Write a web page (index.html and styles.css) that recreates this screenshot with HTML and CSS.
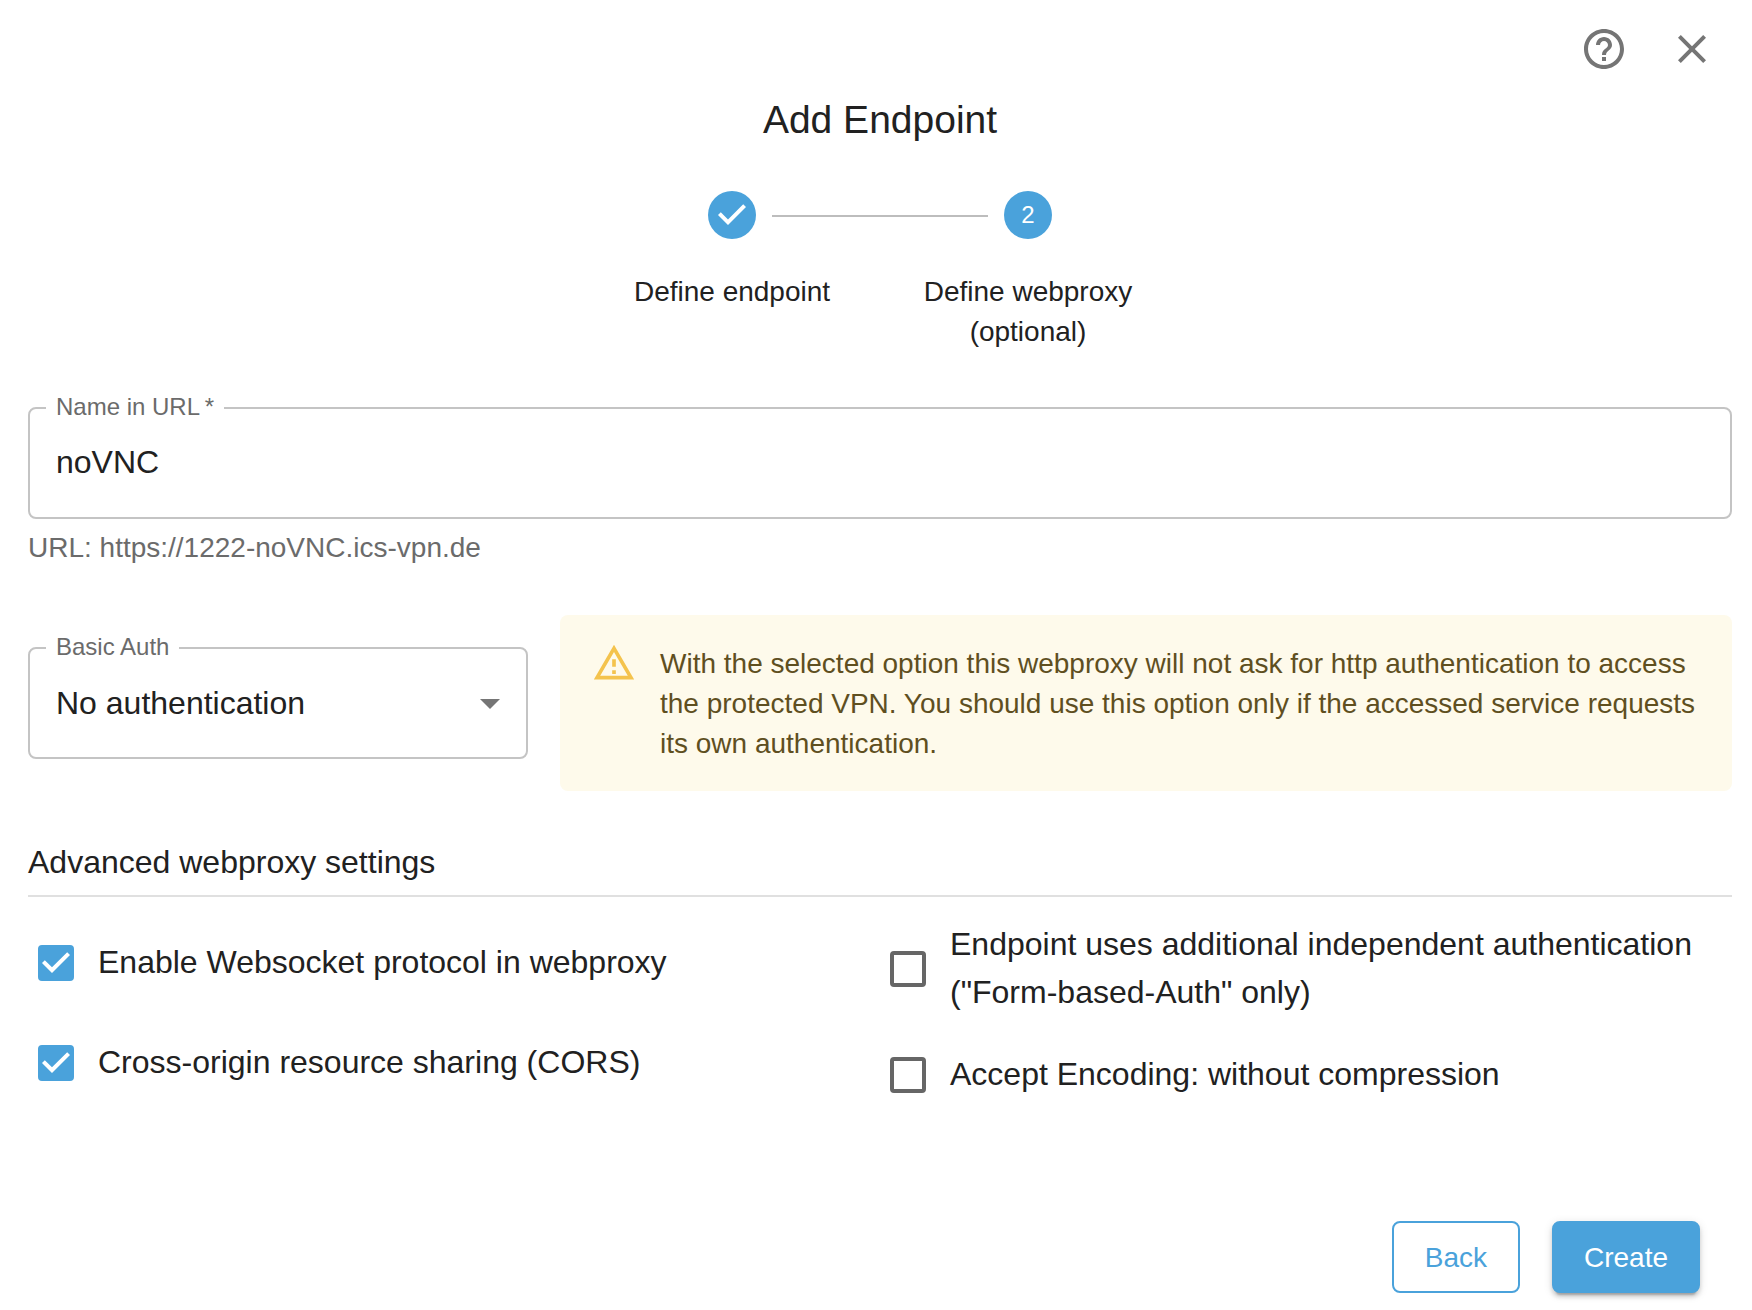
FILE: index.html
```html
<!DOCTYPE html>
<html lang="en">
<head>
<meta charset="utf-8">
<title>Add Endpoint</title>
<link rel="stylesheet" href="styles.css">
</head>
<body>
<main class="dialog">
  <header class="toolbar">
    <button class="icon-button" type="button" aria-label="Help">
      <svg class="icon" viewBox="0 0 24 24"><path d="M11 18h2v-2h-2v2zm1-16C6.48 2 2 6.48 2 12s4.48 10 10 10 10-4.48 10-10S17.52 2 12 2zm0 18c-4.41 0-8-3.59-8-8s3.59-8 8-8 8 3.59 8 8-3.59 8-8 8zm0-14c-2.21 0-4 1.79-4 4h2c0-1.1.9-2 2-2s2 .9 2 2c0 2-3 1.75-3 5h2c0-2.25 3-2.5 3-5 0-2.21-1.79-4-4-4z"/></svg>
    </button>
    <button class="icon-button" type="button" aria-label="Close">
      <svg class="icon" viewBox="0 0 24 24"><path d="M19 6.41L17.59 5 12 10.59 6.41 5 5 6.41 10.59 12 5 17.59 6.41 19 12 13.41 17.59 19 19 17.59 13.41 12z"/></svg>
    </button>
  </header>

  <form class="form">
    <h1 class="title">Add Endpoint</h1>

    <ol class="stepper">
      <li class="step">
        <span class="step-badge">
          <svg class="step-check" viewBox="0 0 24 24"><path d="M10 17l-5-5 1.4-1.4 3.6 3.6 7.6-7.6L19 8l-9 9z"/></svg>
        </span>
        <span class="step-label">Define endpoint</span>
      </li>
      <li class="step">
        <span class="step-badge">2</span>
        <span class="step-label">Define webproxy (optional)</span>
      </li>
    </ol>

    <div class="field">
      <fieldset class="outline">
        <legend class="legend"><label for="name">Name in URL&thinsp;*</label></legend>
        <input class="control" id="name" type="text" value="noVNC" required aria-describedby="name-help">
      </fieldset>
      <p class="helper" id="name-help">URL: https://1222-noVNC.ics-vpn.de</p>
    </div>

    <div class="auth">
      <fieldset class="outline auth-select">
        <legend class="legend"><label for="auth">Basic Auth</label></legend>
        <div class="select-row">
          <select class="control" id="auth"><option>No authentication</option></select>
          <svg class="icon select-arrow" viewBox="0 0 24 24"><path d="M7 10l5 5 5-5z"/></svg>
        </div>
      </fieldset>
      <div class="alert" role="alert">
        <svg class="alert-icon" viewBox="0 0 24 24"><path d="M12 5.99L19.53 19H4.47L12 5.99M12 2L1 21h22L12 2zm1 14h-2v2h2v-2zm0-6h-2v4h2v-4z"/></svg>
        <p class="alert-text">With the selected option this webproxy will not ask for http authentication to access the protected VPN. You should use this option only if the accessed service requests its own authentication.</p>
      </div>
    </div>

    <section class="advanced">
      <h2 class="section-title">Advanced webproxy settings</h2>
      <div class="options">
        <div class="option-column">
          <label class="option"><span class="tick"><input class="box" type="checkbox" checked><svg class="tick-mark" viewBox="0 0 24 24"><path d="M10 17l-5-5 1.41-1.41L10 14.17l7.59-7.59L19 8l-9 9z"/></svg></span><span class="option-text">Enable Websocket protocol in webproxy</span></label>
          <label class="option"><span class="tick"><input class="box" type="checkbox" checked><svg class="tick-mark" viewBox="0 0 24 24"><path d="M10 17l-5-5 1.41-1.41L10 14.17l7.59-7.59L19 8l-9 9z"/></svg></span><span class="option-text">Cross-origin resource sharing (CORS)</span></label>
        </div>
        <div class="option-column">
          <label class="option"><span class="tick"><input class="box" type="checkbox"><svg class="tick-mark" viewBox="0 0 24 24"><path d="M10 17l-5-5 1.41-1.41L10 14.17l7.59-7.59L19 8l-9 9z"/></svg></span><span class="option-text">Endpoint uses additional independent authentication ("Form-based-Auth" only)</span></label>
          <label class="option"><span class="tick"><input class="box" type="checkbox"><svg class="tick-mark" viewBox="0 0 24 24"><path d="M10 17l-5-5 1.41-1.41L10 14.17l7.59-7.59L19 8l-9 9z"/></svg></span><span class="option-text">Accept Encoding: without compression</span></label>
        </div>
      </div>
    </section>

    <footer class="actions">
      <button class="button button-outlined" type="button">Back</button>
      <button class="button button-filled" type="submit">Create</button>
    </footer>
  </form>
</main>
</body>
</html>
```
FILE: styles.css
```css
:root {
  --blue: #4aa2db;
  --text: #212121;
  --muted: #6b6b6b;
  --border: #c4c4c4;
}

* {
  box-sizing: border-box;
}

body {
  margin: 0;
  background: #fff;
  color: var(--text);
  font: 32px/48px "Liberation Sans", Arial, Helvetica, sans-serif;
}

h1, h2, p, ol, fieldset {
  margin: 0;
  padding: 0;
}

.dialog {
  padding: 25px 20px 16px 28px;
}

.toolbar {
  display: flex;
  justify-content: flex-end;
  gap: 40px;
  padding-right: 16px;
}

.icon-button {
  display: flex;
  padding: 0;
  border: 0;
  background: none;
  cursor: pointer;
}

.icon {
  width: 48px;
  height: 48px;
  fill: #757575;
}

.form {
  display: flex;
  flex-direction: column;
}

.title {
  margin-top: 23px;
  font-size: 39px;
  font-weight: 400;
  line-height: 48px;
  text-align: center;
}

/* Stepper */
.stepper {
  display: flex;
  align-self: center;
  margin-top: 47px;
  list-style: none;
}

.step {
  display: grid;
  grid-template-columns: 1fr 48px 1fr;
  align-content: start;
  row-gap: 33px;
  column-gap: 16px;
  width: 296px;
}

.step::before,
.step::after {
  content: "";
  grid-row: 1;
  align-self: center;
  height: 2px;
  margin-top: 2px;
}

.step::before {
  grid-column: 1;
}

.step::after {
  grid-column: 3;
}

.step:not(:last-child)::after,
.step:not(:first-child)::before {
  background: #bdbdbd;
}

.step-badge {
  grid-column: 2;
  grid-row: 1;
  display: flex;
  align-items: center;
  justify-content: center;
  height: 48px;
  border-radius: 50%;
  background: var(--blue);
  color: #fff;
  font-size: 24px;
}

.step-check {
  width: 48px;
  height: 48px;
  fill: #fff;
}

.step-label {
  grid-column: 1 / -1;
  padding: 0 32px;
  font-size: 28px;
  line-height: 40px;
  text-align: center;
}

/* Outlined fields */
.outline {
  min-width: 0;
  padding: 0 26px;
  border: 2px solid var(--border);
  border-radius: 8px;
}

.legend {
  margin-left: -10px;
  padding: 0 10px 2px;
  color: var(--muted);
  font-size: 24px;
  line-height: 28px;
}

.control {
  display: block;
  width: 100%;
  height: 94px;
  padding: 0 0 15px;
  border: 0;
  outline: 0;
  appearance: none;
  background: none;
  color: var(--text);
  font: inherit;
}

.field {
  margin-top: 41px;
}

.helper {
  margin-top: 9px;
  color: var(--muted);
  font-size: 28px;
  line-height: 40px;
}

.auth {
  display: flex;
  align-items: center;
  gap: 32px;
  margin-top: 47px;
}

/* The legend rises above the border, so the negative margin centres the border box. */
.auth-select {
  flex: 0 0 500px;
  margin-top: -14px;
}

.select-row {
  display: grid;
  align-items: center;
}

.select-row > * {
  grid-area: 1 / 1;
}

.select-arrow {
  justify-self: end;
  margin: 0 -14px 14px 0;
  pointer-events: none;
}

.alert {
  display: flex;
  flex: 1;
  gap: 24px;
  padding: 26px 32px;
  border-radius: 8px;
  background: #fefaeb;
  color: #5f4f1f;
}

.alert-icon {
  flex: none;
  width: 44px;
  height: 44px;
  fill: #f4c34d;
}

.alert-text {
  padding: 3px 0 1px;
  font-size: 28px;
  line-height: 40px;
}

/* Advanced settings */
.section-title {
  margin-top: 47px;
  padding-bottom: 9px;
  border-bottom: 2px solid #e0e0e0;
  font-size: 32px;
  font-weight: 400;
  line-height: 48px;
}

.options {
  display: grid;
  grid-template-columns: 1fr 1fr;
  margin-top: 23px;
}

.option-column {
  display: flex;
  flex-direction: column;
  gap: 14px;
}

.option {
  display: flex;
  align-items: center;
  gap: 18px;
  min-height: 86px;
  padding-left: 4px;
}

.option-text {
  padding-bottom: 2px;
}

.tick {
  display: grid;
  flex: none;
  place-items: center;
  width: 48px;
  height: 48px;
}

.tick > * {
  grid-area: 1 / 1;
}

.box {
  width: 36px;
  height: 36px;
  margin: 0;
  border: 4px solid #666;
  border-radius: 4px;
  appearance: none;
}

.box:checked {
  border-color: var(--blue);
  background: var(--blue);
}

.tick-mark {
  width: 48px;
  height: 48px;
  fill: #fff;
  pointer-events: none;
}

.box:not(:checked) + .tick-mark {
  display: none;
}

/* Actions */
.actions {
  display: flex;
  justify-content: flex-end;
  gap: 32px;
  margin-top: 103px;
  padding-right: 32px;
}

.button {
  height: 72px;
  padding: 2px 31px 0;
  border: 2px solid var(--blue);
  border-radius: 8px;
  font: 28px/40px "Liberation Sans", Arial, Helvetica, sans-serif;
  cursor: pointer;
}

.button-outlined {
  background: #fff;
  color: var(--blue);
}

.button-filled {
  padding: 2px 30px 0;
  background: var(--blue);
  color: #fff;
  box-shadow: 0 6px 2px -4px rgba(0, 0, 0, 0.2), 0 4px 4px rgba(0, 0, 0, 0.14), 0 2px 10px rgba(0, 0, 0, 0.12);
}
```
